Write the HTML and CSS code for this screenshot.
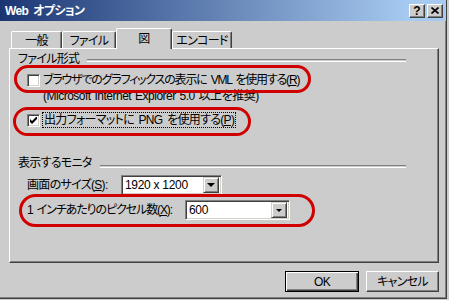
FILE: index.html
```html
<!doctype html>
<html>
    <head>
        <meta charset="utf-8" />
        <title>Web オプション</title>
        <link rel="stylesheet" href="styles.css">
    </head>
    <body>
        <div class="window">
            <div class="frame">
                <div class="titlebar">
                    <span class="title">Web オプション</span>
                    <div class="caption-buttons">
                        <span class="cap-btn help">?</span>
                        <span class="cap-btn close">
                            <svg width="8" height="7" viewBox="0 0 8 7"><path d="M0.5 0.5 L7.5 6.5 M7.5 0.5 L0.5 6.5" stroke="#000" stroke-width="1.6" /></svg>
                        </span>
                    </div>
                </div>

                <div class="tabs">
                    <div class="tab tab-general">一般</div>
                    <div class="tab tab-file">ファイル</div>
                    <div class="tab tab-picture active">図</div>
                    <div class="tab tab-encode">エンコード</div>
                </div>

                <div class="panel">
                    <div class="group">
                        <div class="group-head"><span>ファイル形式</span><i class="etch"></i></div>
                        <div class="check-row">
                            <span class="checkbox"></span>
                            <span class="vml-label">ブラウザでのグラフィックスの表示に VML を使用する(<u>R</u>)</span>
                        </div>
                        <div class="note">(Microsoft Internet Explorer 5.0 以上を推奨)</div>
                        <div class="check-row second">
                            <span class="checkbox">
                                <svg width="7" height="7" viewBox="0 0 7 7"><path d="M0 2 L2 4 L7 -1 L7 2 L2 7 L0 5 Z" fill="#000" /></svg>
                            </span>
                            <span class="focus">出力フォーマットに PNG を使用する(<u>P</u>)</span>
                        </div>
                    </div>

                    <div class="group monitor">
                        <div class="group-head"><span>表示するモニタ</span><i class="etch"></i></div>
                        <div class="field">
                            <span class="field-label size-label">画面のサイズ(<u>S</u>):</span>
                            <div class="combo size-combo">
                                <span class="combo-value">1920 x 1200</span>
                                <span class="drop"><i></i></span>
                            </div>
                        </div>
                        <div class="field ppi">
                            <span class="field-label ppi-label">1 インチあたりのピクセル数(<u>X</u>):</span>
                            <div class="combo ppi-combo">
                                <span class="combo-value">600</span>
                                <span class="drop small"><i></i></span>
                            </div>
                        </div>
                    </div>
                </div>

                <div class="actions">
                    <span class="btn default">OK</span>
                    <span class="btn">キャンセル</span>
                </div>
            </div>

            <span class="mark mark-vml"></span>
            <span class="mark mark-png"></span>
            <span class="mark mark-ppi"></span>
        </div>
    </body>
</html>
```

FILE: styles.css
```css
body {
    margin: 0;
    background-color: #cccccc;
    font-family: "Liberation Sans", "Noto Sans CJK JP", sans-serif;
    font-size: 12px;
    line-height: 14px;
    font-feature-settings: "palt";
    letter-spacing: -0.7px;
    word-spacing: 2px;
    color: #000;
}

u {
    text-decoration-thickness: 1px;
    text-underline-offset: 1px;
}

.window {
    position: relative;
    width: 449px;
    height: 300px;
    box-sizing: border-box;
    padding-right: 2px;
    padding-bottom: 1px;
    background-color: #cccccc;
}

.frame {
    height: 100%;
    box-sizing: border-box;
    border-right: 1px solid #404040;
    border-bottom: 1px solid #404040;
    box-shadow: inset -1px -1px 0 #808080;
    display: flex;
    flex-direction: column;
}

/* title bar */

.titlebar {
    height: 21px;
    flex-shrink: 0;
    background: linear-gradient(to right, #1b3573, #a6caf0 92%);
    display: flex;
    align-items: center;
    justify-content: space-between;
    padding: 0 3px 0 5px;
}

.title {
    color: #fff;
    font-weight: bold;
    letter-spacing: -0.6px;
}

.caption-buttons {
    display: flex;
    gap: 2px;
}

.cap-btn {
    width: 16px;
    height: 14px;
    box-sizing: border-box;
    background-color: #cccccc;
    border-top: 1px solid #fff;
    border-left: 1px solid #fff;
    border-right: 1px solid #404040;
    border-bottom: 1px solid #404040;
    box-shadow: inset -1px -1px 0 #808080;
    display: flex;
    align-items: center;
    justify-content: center;
    font-weight: bold;
    font-size: 12px;
    line-height: 12px;
    letter-spacing: 0;
}

/* tabs */

.tabs {
    display: flex;
    align-items: flex-end;
    height: 20px;
    margin-top: 7px;
    padding-left: 11px;
    position: relative;
    z-index: 1;
}

.tab {
    height: 17px;
    box-sizing: border-box;
    border-top: 1px solid #fff;
    border-left: 1px solid #fff;
    border-right: 1px solid #404040;
    box-shadow: inset -1px 0 0 #808080;
    border-radius: 2px 2px 0 0;
    text-align: center;
    padding-top: 2px;
}

.tab-general { width: 51px; }
.tab-file { width: 54px; }
.tab-encode { width: 60px; }

.tab.active {
    width: 56px;
    height: 21px;
    margin-bottom: -1px;
    padding-top: 3px;
    background-color: #cccccc;
}

/* tab page */

.panel {
    width: 430px;
    height: 215px;
    margin-left: 9px;
    box-sizing: border-box;
    border-top: 1px solid #fff;
    border-left: 1px solid #fff;
    border-right: 1px solid #404040;
    border-bottom: 1px solid #404040;
    box-shadow: inset -1px -1px 0 #808080;
    padding: 3px 32px 0 8px;
}

.group {
    display: flex;
    flex-direction: column;
}

.group-head {
    display: flex;
    align-items: center;
    gap: 8px;
}

.etch {
    flex-grow: 1;
    height: 1px;
    border-top: 1px solid #808080;
    border-bottom: 1px solid #fff;
    margin-top: 2px;
}

.check-row {
    display: flex;
    align-items: center;
    gap: 3px;
    margin: 7px 0 0 9px;
    white-space: nowrap;
}

.check-row.second {
    margin-top: 10px;
}

.vml-label {
    letter-spacing: -1.2px;
}

.checkbox {
    width: 13px;
    height: 13px;
    flex-shrink: 0;
    box-sizing: border-box;
    background-color: #fff;
    border-top: 1px solid #808080;
    border-left: 1px solid #808080;
    border-right: 1px solid #fff;
    border-bottom: 1px solid #fff;
    box-shadow: inset 1px 1px 0 #404040, inset -1px -1px 0 #d4d0c8;
    display: flex;
    align-items: center;
    justify-content: center;
}

.focus {
    outline: 1px dotted #000;
    outline-offset: 0;
    padding: 0 1px;
}

.note {
    margin: 2px 0 0 25px;
    letter-spacing: -0.5px;
    word-spacing: 1px;
    white-space: nowrap;
}

/* monitor */

.monitor {
    margin-top: 29px;
}

.monitor .etch {
    margin-top: 6px;
}

.field {
    display: flex;
    align-items: center;
    margin: 5px 0 0 9px;
    height: 20px;
}

.field.ppi {
    margin-top: 5px;
}

.field-label {
    white-space: nowrap;
    flex-shrink: 0;
}

.size-label { width: 94px; }
.ppi-label { width: 158px; letter-spacing: -1.1px; }

.combo {
    height: 20px;
    box-sizing: border-box;
    background-color: #fff;
    border-top: 1px solid #808080;
    border-left: 1px solid #808080;
    border-right: 1px solid #fff;
    border-bottom: 1px solid #fff;
    box-shadow: inset 1px 1px 0 #404040, inset -1px -1px 0 #d4d0c8;
    display: flex;
    align-items: center;
    padding: 2px;
}

.size-combo { width: 101px; }
.ppi-combo { width: 105px; }

.combo-value {
    flex-grow: 1;
    padding-left: 1px;
    font-size: 12px;
    letter-spacing: -0.3px;
    word-spacing: 0;
}

.drop {
    width: 16px;
    height: 16px;
    box-sizing: border-box;
    background-color: #cccccc;
    border-top: 1px solid #d4d0c8;
    border-left: 1px solid #d4d0c8;
    border-right: 1px solid #404040;
    border-bottom: 1px solid #404040;
    box-shadow: inset 1px 1px 0 #fff, inset -1px -1px 0 #808080;
    display: flex;
    align-items: center;
    justify-content: center;
}

.drop i {
    width: 0;
    height: 0;
    border-left: 4px solid transparent;
    border-right: 4px solid transparent;
    border-top: 4px solid #000;
}

.drop.small i {
    border-left-width: 3px;
    border-right-width: 3px;
    border-top-width: 3px;
}

/* buttons */

.actions {
    display: flex;
    justify-content: flex-end;
    gap: 7px;
    margin-top: 8px;
    padding-right: 7px;
}

.btn {
    width: 73px;
    height: 21px;
    box-sizing: border-box;
    border-top: 1px solid #fff;
    border-left: 1px solid #fff;
    border-right: 1px solid #404040;
    border-bottom: 1px solid #404040;
    box-shadow: inset -1px -1px 0 #808080;
    display: flex;
    align-items: center;
    justify-content: center;
}

.btn.default {
    width: 74px;
    border: 1px solid #000;
    box-shadow: inset 1px 1px 0 #fff, inset -1px -1px 0 #404040, inset -2px -2px 0 #808080;
}

/* red annotation rings drawn over the dialog */

.mark {
    position: absolute;
    box-sizing: border-box;
    border: 3px solid #d00000;
    border-radius: 999px;
    pointer-events: none;
}

.mark-vml {
    left: 14px;
    top: 65px;
    width: 297px;
    height: 28px;
}

.mark-png {
    left: 13px;
    top: 107px;
    width: 238px;
    height: 29px;
}

.mark-ppi {
    left: 19px;
    top: 194px;
    width: 296px;
    height: 33px;
}
```
